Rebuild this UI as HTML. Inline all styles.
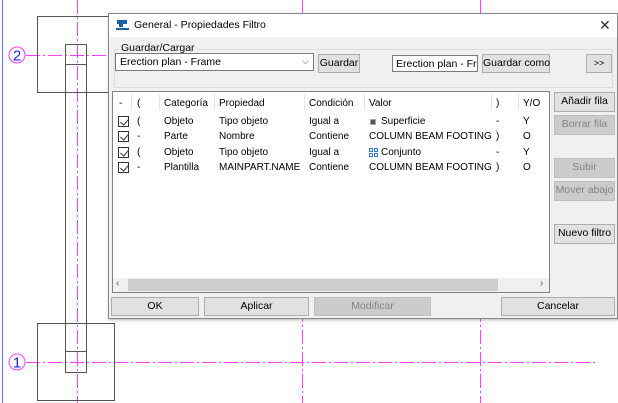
<!DOCTYPE html>
<html><head><meta charset="utf-8"><style>
*{margin:0;padding:0;box-sizing:border-box}
body{width:618px;height:403px;overflow:hidden;background:#fff;font-family:"Liberation Sans",sans-serif;font-size:10px;color:#000;position:relative}
.a{position:absolute}
.btn{position:absolute;background:#e1e1e1;border:1px solid #adadad;text-align:center;line-height:17px;font-size:10.5px;white-space:nowrap}
.dis{background:#cccccc;border-color:#bfbfbf;color:#838383}
.t{position:absolute;white-space:nowrap}
.cb{position:absolute;width:11px;height:11px;border:1px solid #333;background:#fff}
.cb:after{content:"";position:absolute;left:3px;top:0px;width:4px;height:7px;border-right:1.3px solid #333;border-bottom:1.3px solid #333;transform:rotate(40deg)}
.r div.t{top:auto}
</style></head><body>
<svg class="a" style="left:0;top:0" width="618" height="403">
<line x1="2.5" y1="0" x2="2.5" y2="403" stroke="#6a6aff" stroke-width="1"/>
<g stroke="#ff40ff" stroke-width="1" stroke-dasharray="14,3,2,3">
<line x1="77.5" y1="0" x2="77.5" y2="403"/>
<line x1="302.5" y1="0" x2="302.5" y2="403"/>
<line x1="480.5" y1="0" x2="480.5" y2="403"/>
<line x1="26" y1="55.5" x2="618" y2="55.5"/>
<line x1="26" y1="362.5" x2="595" y2="362.5"/>
</g>
<circle cx="17" cy="55" r="8" fill="none" stroke="#ff40ff"/>
<circle cx="17" cy="362" r="8" fill="none" stroke="#ff40ff"/>
<text x="17" y="60.5" font-size="15" fill="#2020ff" text-anchor="middle" font-family="Liberation Sans">2</text>
<text x="17" y="367.5" font-size="15" fill="#2020ff" text-anchor="middle" font-family="Liberation Sans">1</text>
<g fill="none" stroke="#555" stroke-width="1">
<rect x="37.5" y="16.5" width="72" height="76"/>
<rect x="37.5" y="323.5" width="77" height="77"/>
<rect x="65.5" y="44.5" width="21" height="328"/>
<line x1="65" y1="64.5" x2="86" y2="64.5"/>
<line x1="65" y1="351.5" x2="86" y2="351.5"/>
</g>
</svg>

<div class="a" style="left:108px;top:13px;width:510px;height:306px;background:#f0f0f0;border:1px solid #888;box-shadow:1px 1px 3px rgba(0,0,0,.3)">
 <div class="a" style="left:0;top:0;width:508px;height:23px;background:#fff"></div>
 <svg class="a" style="left:7px;top:5px" width="14" height="12"><rect x="1" y="1" width="10" height="4" fill="#1a5fa8"/><rect x="3" y="5" width="4" height="3" fill="#1a5fa8"/><rect x="0" y="9" width="13" height="2" fill="#1a5fa8"/></svg>
 <div class="t" style="left:25px;top:5px;font-size:10.5px">General - Propiedades Filtro</div>
 <div class="t" style="left:490px;top:3px;font-size:14px;color:#333">✕</div>

 <div class="a" style="left:5px;top:35px;width:499px;height:39px;border:1px solid #dcdcdc"></div>
 <div class="t" style="left:10px;top:28px;background:#f0f0f0;padding:0 2px;font-size:10.5px">Guardar/Cargar</div>
 <div class="a" style="left:6px;top:39px;width:199px;height:18px;background:#fff;border:1px solid #7a7a7a"></div>
 <div class="t" style="left:11px;top:42px;font-size:10.5px">Erection plan - Frame</div>
 <div class="t" style="left:193px;top:42px;font-size:9px;color:#555">⌵</div>
 <div class="btn" style="left:209px;top:40px;width:42px;height:19px">Guardar</div>
 <div class="a" style="left:283px;top:41px;width:86px;height:17px;background:#fff;border:1px solid #7a7a7a;overflow:hidden"><span class="t" style="left:3px;top:2px;font-size:10.5px">Erection plan - Fra</span></div>
 <div class="btn" style="left:373px;top:40px;width:68px;height:19px">Guardar como</div>
 <div class="btn" style="left:477px;top:40px;width:26px;height:19px;font-size:9px">&gt;&gt;</div>

 <div class="a" style="left:3px;top:77px;width:438px;height:202px;background:#fff;border:1px solid #828282"></div>
 <div class="a" style="left:4px;top:264px;width:436px;height:14px;background:#f0f0f0"></div>
 <div class="a" style="left:19px;top:265px;width:370px;height:12px;background:#cdcdcd"></div>
 <div class="t" style="left:7px;top:264px;font-size:10px;color:#555">‹</div>
 <div class="t" style="left:431px;top:264px;font-size:10px;color:#555">›</div>
 <svg class="a" style="left:4px;top:80px" width="436" height="16"><g stroke="#e5e5e5"><line x1="18.5" y1="0" x2="18.5" y2="16"/><line x1="46.5" y1="0" x2="46.5" y2="16"/><line x1="101.5" y1="0" x2="101.5" y2="16"/><line x1="191.5" y1="0" x2="191.5" y2="16"/><line x1="251.5" y1="0" x2="251.5" y2="16"/><line x1="378.5" y1="0" x2="378.5" y2="16"/><line x1="405.5" y1="0" x2="405.5" y2="16"/></g></svg>
 <div style="position:absolute;left:0;top:1px">
  <div class="t" style="left:10px;top:83px">-</div><div class="t" style="left:28px;top:83px">(</div><div class="t" style="left:55px;top:83px">Categoría</div><div class="t" style="left:110px;top:83px">Propiedad</div><div class="t" style="left:200px;top:83px">Condición</div><div class="t" style="left:260px;top:83px">Valor</div><div class="t" style="left:387px;top:83px">)</div><div class="t" style="left:414px;top:83px">Y/O</div>

  <div class="cb" style="left:9px;top:101px"></div><div class="t" style="left:28px;top:101px">(</div><div class="t" style="left:55px;top:101px">Objeto</div><div class="t" style="left:110px;top:101px">Tipo objeto</div><div class="t" style="left:200px;top:101px">Igual a</div><div class="a" style="left:261px;top:104px;width:6px;height:6px;background:#555;border:1px solid #aaa"></div><div class="t" style="left:272px;top:101px">Superficie</div><div class="t" style="left:387px;top:101px">-</div><div class="t" style="left:414px;top:101px">Y</div>

  <div class="cb" style="left:9px;top:116px"></div><div class="t" style="left:28px;top:116px">-</div><div class="t" style="left:55px;top:116px">Parte</div><div class="t" style="left:110px;top:116px">Nombre</div><div class="t" style="left:200px;top:116px">Contiene</div><div class="t" style="left:260px;top:116px">COLUMN BEAM FOOTING</div><div class="t" style="left:387px;top:116px">)</div><div class="t" style="left:414px;top:116px">O</div>

  <div class="cb" style="left:9px;top:132px"></div><div class="t" style="left:28px;top:132px">(</div><div class="t" style="left:55px;top:132px">Objeto</div><div class="t" style="left:110px;top:132px">Tipo objeto</div><div class="t" style="left:200px;top:132px">Igual a</div>
  <svg class="a" style="left:260px;top:133px" width="9" height="9"><g fill="none" stroke="#2a7fd4"><rect x="0.5" y="0.5" width="3" height="3"/><rect x="5.5" y="0.5" width="3" height="3"/><rect x="0.5" y="5.5" width="3" height="3"/><rect x="5.5" y="5.5" width="3" height="3"/></g></svg>
  <div class="t" style="left:272px;top:132px">Conjunto</div><div class="t" style="left:387px;top:132px">-</div><div class="t" style="left:414px;top:132px">Y</div>

  <div class="cb" style="left:9px;top:147px"></div><div class="t" style="left:28px;top:147px">-</div><div class="t" style="left:55px;top:147px">Plantilla</div><div class="t" style="left:110px;top:147px">MAINPART.NAME</div><div class="t" style="left:200px;top:147px">Contiene</div><div class="t" style="left:260px;top:147px">COLUMN BEAM FOOTING</div><div class="t" style="left:387px;top:147px">)</div><div class="t" style="left:414px;top:147px">O</div>
 </div>

 <div class="btn" style="left:445px;top:78px;width:61px;height:20px">Añadir fila</div>
 <div class="btn dis" style="left:445px;top:101px;width:61px;height:20px">Borrar fila</div>
 <div class="btn dis" style="left:445px;top:144px;width:61px;height:20px">Subir</div>
 <div class="btn dis" style="left:445px;top:167px;width:61px;height:20px">Mover abajo</div>
 <div class="btn" style="left:445px;top:210px;width:61px;height:20px">Nuevo filtro</div>

 <div class="btn" style="left:2px;top:283px;width:88px;height:19px">OK</div>
 <div class="btn" style="left:95px;top:283px;width:105px;height:19px">Aplicar</div>
 <div class="btn dis" style="left:205px;top:283px;width:117px;height:19px">Modificar</div>
 <div class="btn" style="left:392px;top:283px;width:114px;height:19px">Cancelar</div>
</div>
</body></html>
